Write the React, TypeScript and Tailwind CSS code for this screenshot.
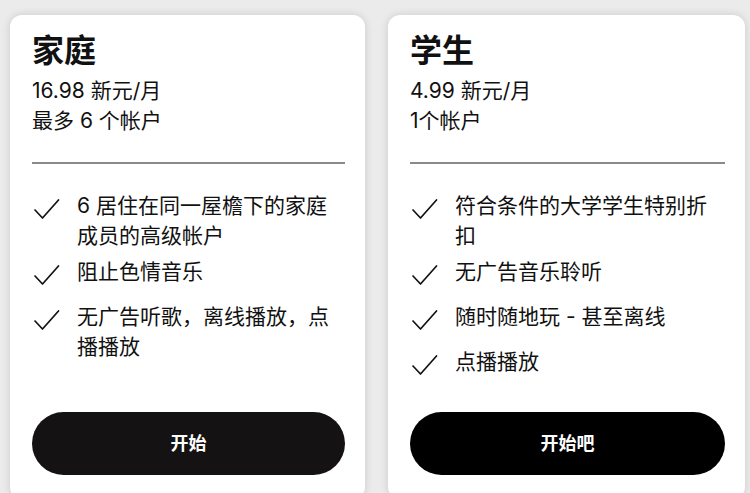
import React from "react";

const font = { fontFamily: '"Inter", "Noto Sans CJK SC", sans-serif' };

function Check() {
  return (
    <svg width="30" height="30" viewBox="0 0 30 30" className="shrink-0">
      <path d="M3 19 L10.5 27 L26.5 9" fill="none" stroke="#111" strokeWidth="1.7" strokeLinecap="round" strokeLinejoin="round" />
    </svg>
  );
}

type Feature = { lines: string[]; mt: string };

function Card({
  title,
  price,
  accounts,
  features,
  button,
  btnBg,
}: {
  title: string;
  price: string;
  accounts: string;
  features: Feature[];
  button: string;
  btnBg: string;
}) {
  return (
    <div className="flex flex-col rounded-[12px] bg-white pl-[22px] pr-[20px] pt-[16px] pb-[24px] shadow-[0_0_8px_rgba(0,0,0,0.14)]">
      <div className="text-[32px] leading-[40px] font-bold text-[#111]">{title}</div>
      <div className="mt-[5px] text-[21px] leading-[30px] text-[#111]">{price}</div>
      <div className="text-[21px] leading-[30px] text-[#111]">{accounts}</div>
      <div className="mt-[26px] h-[2px] bg-[#8a8a8a]" />
      <ul className="mt-[27px] flex flex-1 flex-col">
        {features.map((f, i) => (
          <li key={i} className={`flex ${f.mt}`}>
            <div className="w-[45px] shrink-0">
              <Check />
            </div>
            <div className="text-[21px] leading-[30px] text-[#111]">
              {f.lines.map((l, j) => (
                <div key={j} className="whitespace-nowrap">{l}</div>
              ))}
            </div>
          </li>
        ))}
      </ul>
      <button
        className={`mt-[35px] h-[63px] w-full rounded-full ${btnBg} text-[18px] font-bold text-white`}
      >
        {button}
      </button>
    </div>
  );
}

export default function App() {
  return (
    <div className="h-[493px] overflow-hidden bg-[#ebebeb] pl-[10px] pr-[5px] pt-[15px]" style={font}>
      <div className="grid grid-cols-[355px_357px] gap-[23px]">
        <Card
          title="家庭"
          price="16.98 新元/月"
          accounts="最多 6 个帐户"
          features={[
            { lines: ["6 居住在同一屋檐下的家庭", "成员的高级帐户"], mt: "" },
            { lines: ["阻止色情音乐"], mt: "mt-[6px]" },
            { lines: ["无广告听歌，离线播放，点", "播播放"], mt: "mt-[15px]" },
          ]}
          button="开始"
          btnBg="bg-[#141212]"
        />
        <Card
          title="学生"
          price="4.99 新元/月"
          accounts="1个帐户"
          features={[
            { lines: ["符合条件的大学学生特别折", "扣"], mt: "" },
            { lines: ["无广告音乐聆听"], mt: "mt-[6px]" },
            { lines: ["随时随地玩 - 甚至离线"], mt: "mt-[15px]" },
            { lines: ["点播播放"], mt: "mt-[15px]" },
          ]}
          button="开始吧"
          btnBg="bg-black"
        />
      </div>
    </div>
  );
}
